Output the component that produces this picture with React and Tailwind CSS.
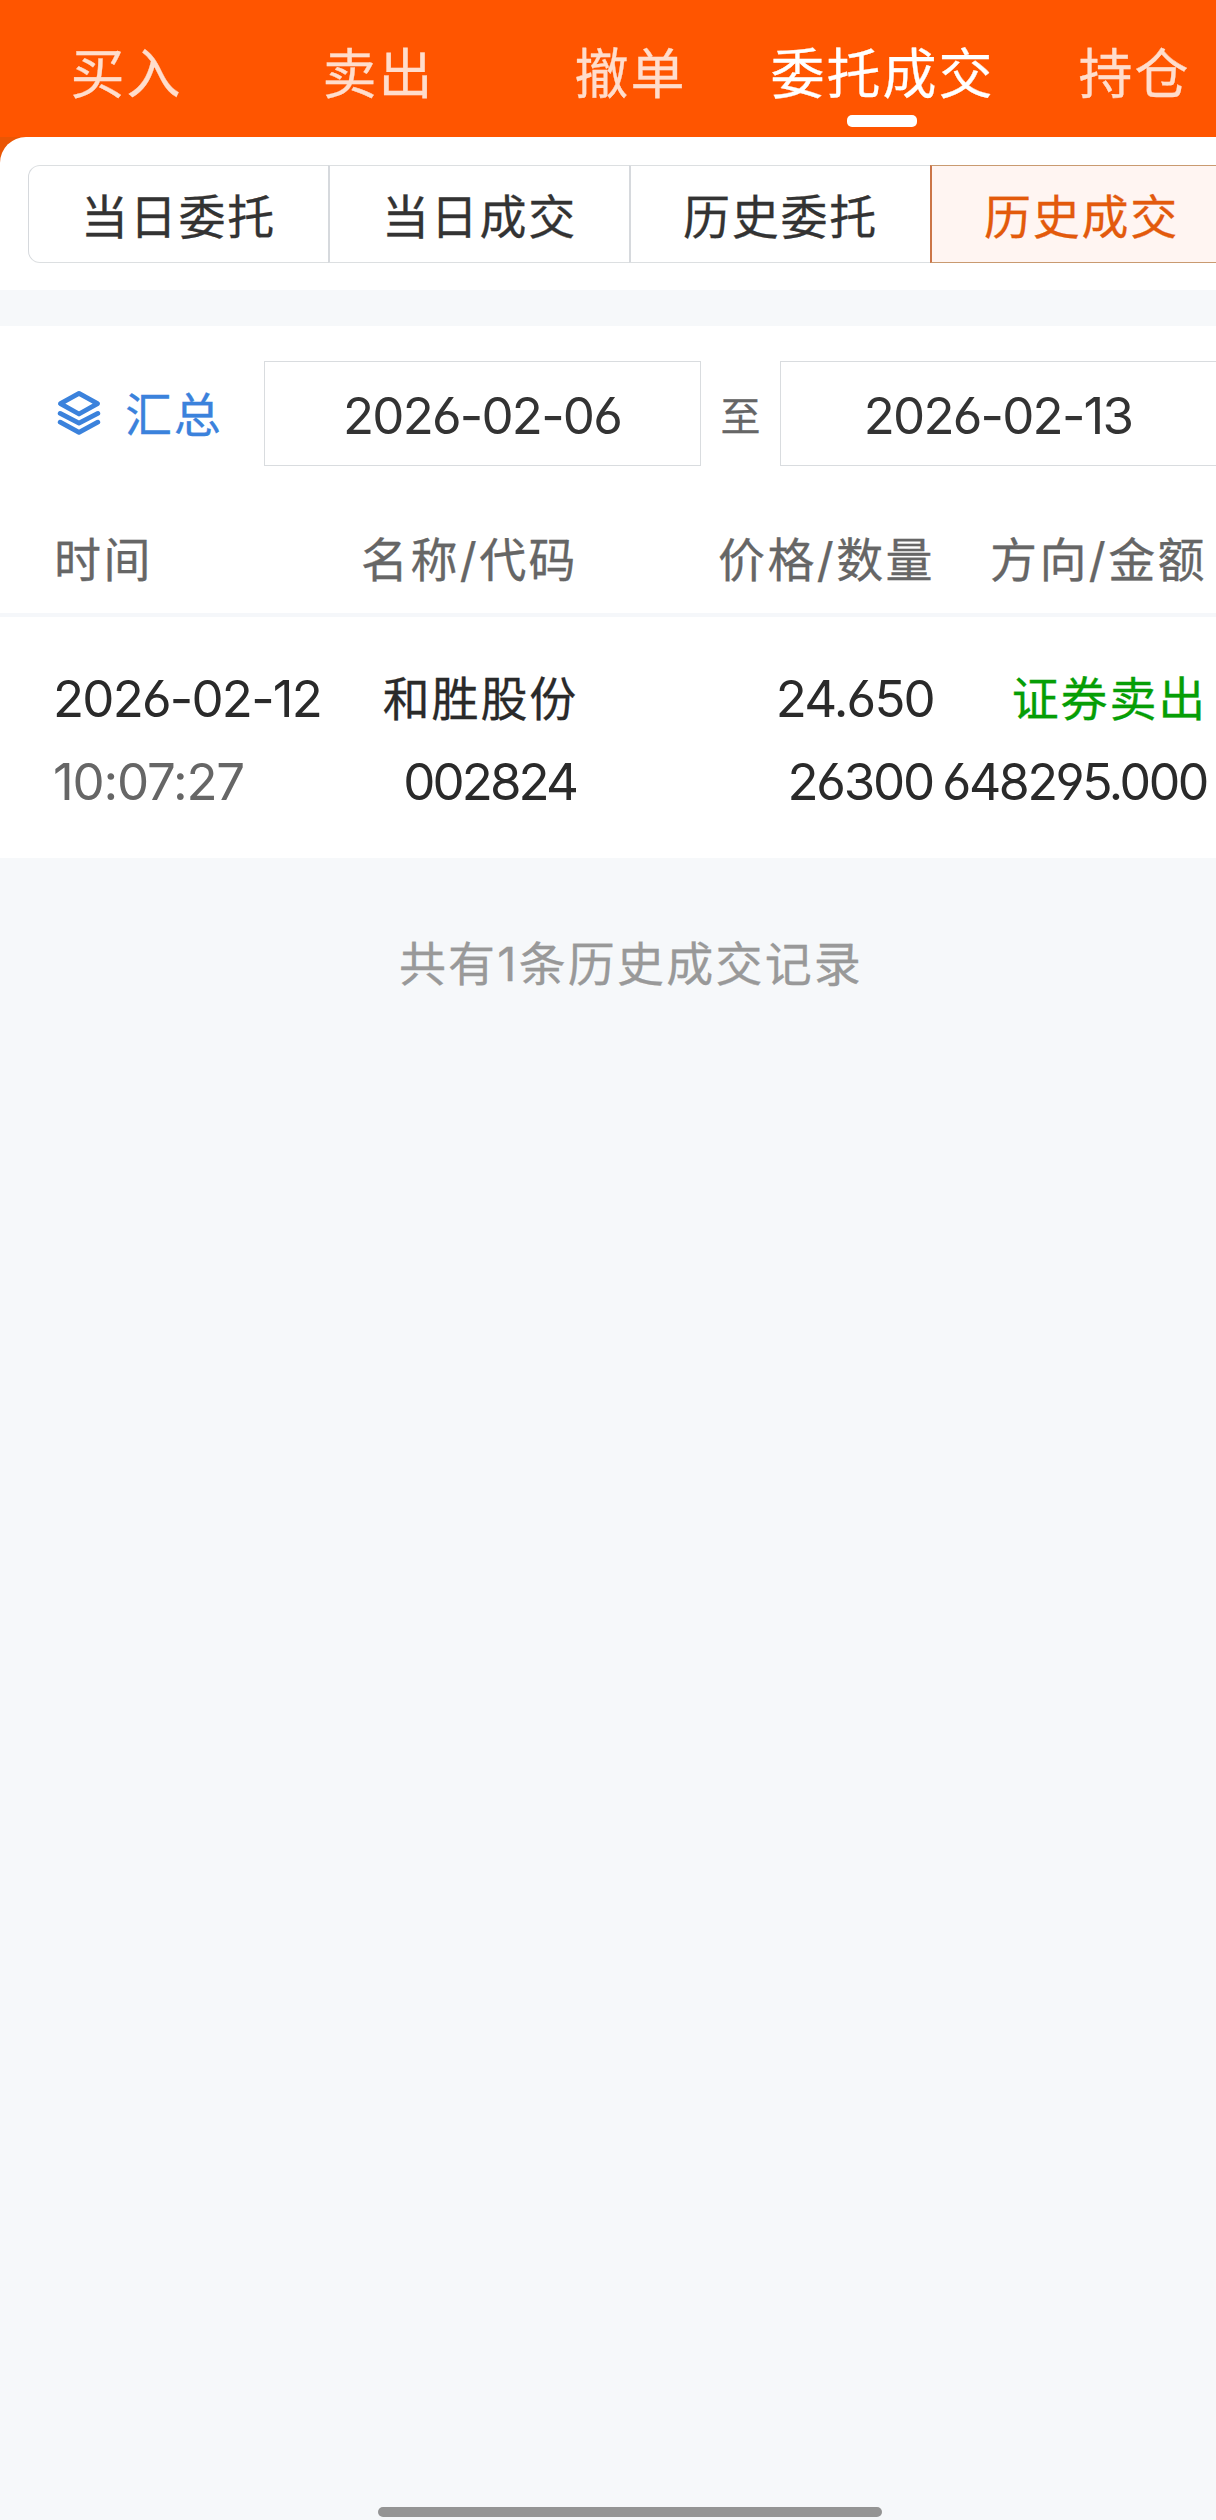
const tabs = ['买入', '卖出', '撤单', '委托成交', '持仓'];

const segments = ['当日委托', '当日成交', '历史委托', '历史成交'];

const records = [
  {
    date: '2026-02-12',
    time: '10:07:27',
    name: '和胜股份',
    code: '002824',
    price: '24.650',
    amount: '26300',
    side: '证券卖出',
    total: '648295.000',
  },
];

const numberFont = "text-[51px] [-webkit-text-stroke:0px] [font-feature-settings:'cv03','cv04']";

function LayersIcon() {
  return (
    <svg className="mb-[2px]" width="44" height="46" viewBox="0 0 44 46" fill="none" stroke="#3b82dc" strokeWidth="4.8" strokeLinecap="round" strokeLinejoin="round">
      <path d="M22 3.4 L40.6 13.6 L22 24 L3.4 13.6 Z" />
      <path d="M3.2 23.4 L22 33.2 L40.8 23.4" />
      <path d="M3.2 32.2 L22 42.4 L40.8 32.2" />
    </svg>
  );
}

function TopTabs({ active }) {
  return (
    <nav className="flex h-[137px] bg-[#ff5500]">
      {tabs.map((tab, i) => (
        <div key={tab} className="w-[252px] flex flex-col items-center pt-[40px]">
          <span className={`text-[54px] leading-[70px] tracking-[2px] pl-[1px] whitespace-nowrap ${i === active ? 'text-white' : 'text-[#ffddcc]'}`}>
            {tab}
          </span>
          {i === active && <span className="mt-[5px] w-[70px] h-3 rounded-[5px] bg-white" />}
        </div>
      ))}
    </nav>
  );
}

function SegmentBar({ active }) {
  return (
    <div className="bg-[#ea5604]">
      <div className="h-[153px] bg-white rounded-tl-[26px] pl-7 pt-7">
        <div className="flex h-[98px]">
          {segments.map((label, i) => (
            <div
              key={label}
              className={`w-[301px] first:w-[300px] shrink-0 border-y border-l-2 first:border-l first:rounded-l-[12px] flex items-center justify-center text-[47px] tracking-[1.8px] pt-[7px] ${
                i === active ? 'bg-[#fff5f2] border-y-[#c99a70] border-l-[#cb7548] text-[#e35a0c]' : 'border-y-[#dcdfe1] border-l-[#d6d9dd] text-[#333333]'
              }`}
            >
              {label}
            </div>
          ))}
        </div>
      </div>
    </div>
  );
}

function DateBox({ value }) {
  return (
    <div className={`w-[437px] h-[105px] shrink-0 border border-[#d9dcdf] flex items-center justify-center pt-[6px] pr-[1px] tracking-[-1.8px] text-[#333333] ${numberFont}`}>
      {value}
    </div>
  );
}

function DateFilter() {
  return (
    <div className="flex items-center pt-[35px] pl-[57px]">
      <LayersIcon />
      <span className="ml-6 w-[139px] pt-[3px] text-[47px] leading-[60px] tracking-[1.8px] text-[#3b82dc] whitespace-nowrap">汇总</span>
      <DateBox value="2026-02-06" />
      <span className="w-[79px] shrink-0 pt-[6px] text-center text-[40px] text-[#666666]">至</span>
      <DateBox value="2026-02-13" />
    </div>
  );
}

const columns = 'grid grid-cols-[344px_181px_357px_272px] pl-[53px]';

function RecordTable() {
  return (
    <div>
      <div className={`${columns} h-[151px] pt-[59px] border-b-4 border-[#f5f7fa] text-[47px] leading-[70px] tracking-[2.4px] text-[#666666] whitespace-nowrap`}>
        <span className="pl-[1px]">时间</span>
        <span className="flex justify-end">名称/代码</span>
        <span className="text-right">价格/数量</span>
        <span className="text-right">方向/金额</span>
      </div>
      {records.map((r) => (
        <div key={r.code} className={`${columns} h-[241px] pt-[40px] leading-[83px] text-[#2a2a2a] whitespace-nowrap`}>
          <div className={`flex flex-col ${numberFont}`}>
            <span className="tracking-[-1.8px]">{r.date}</span>
            <span className="tracking-[-1.2px] text-[#666666]">{r.time}</span>
          </div>
          <div className="flex flex-col items-end">
            <span className="text-[47px] tracking-[1.8px]">{r.name}</span>
            <span className={`tracking-[-2.9px] pr-[2px] ${numberFont}`}>{r.code}</span>
          </div>
          <div className={`flex flex-col items-end pr-[1px] ${numberFont}`}>
            <span className="tracking-[-1.8px]">{r.price}</span>
            <span className="tracking-[-2.2px] pr-[1px]">{r.amount}</span>
          </div>
          <div className="flex flex-col items-end">
            <span className="text-[47px] tracking-[1.8px] text-[#069e06]">{r.side}</span>
            <span className="text-[50px] tracking-[-2.4px] pt-[1px] [-webkit-text-stroke:0px] [font-feature-settings:'cv03','cv04']">{r.total}</span>
          </div>
        </div>
      ))}
    </div>
  );
}

export default function App() {
  return (
    <div className="w-[1216px] h-[2520px] overflow-hidden bg-[#f6f8fa] font-['Inter','Noto_Sans_CJK_SC',sans-serif] [-webkit-text-stroke:0.3px]">
      <div className="w-[1260px] h-full flex flex-col">
        <TopTabs active={3} />
        <SegmentBar active={3} />
        <div className="mt-9 bg-white">
          <DateFilter />
          <RecordTable />
        </div>
        <p className="mt-[71px] pl-[2px] text-center text-[47px] leading-[70px] tracking-[2.2px] text-[#999999]">
          共有{records.length}条历史成交记录
        </p>
        <div className="mt-auto mb-[3px] self-center w-[504px] h-[10px] rounded-full bg-[#949494]" />
      </div>
    </div>
  );
}
